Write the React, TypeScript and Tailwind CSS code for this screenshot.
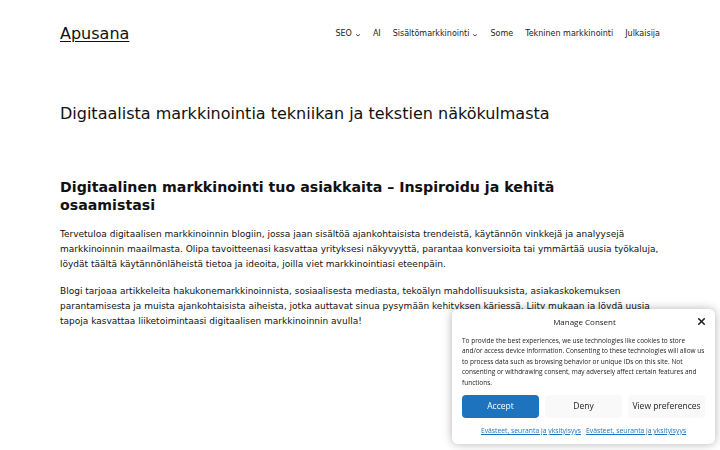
import { X } from 'lucide-react'

function Chevron() {
  return (
    <svg width="6" height="6" viewBox="0 0 12 12" className="ml-[3px] mt-[2px]" fill="none">
      <path d="M2 4.5l4 3.5 4-3.5" stroke="#222" strokeWidth="1.6" />
    </svg>
  )
}

const nav = [
  { label: 'SEO', sub: true },
  { label: 'AI' },
  { label: 'Sisältömarkkinointi', sub: true },
  { label: 'Some' },
  { label: 'Tekninen markkinointi' },
  { label: 'Julkaisija' },
]

function ConsentBox() {
  return (
    <div className="fixed right-[5px] bottom-[6px] w-[263px] bg-white rounded-[6px] shadow-[0_0_10px_rgba(0,0,0,0.3)] px-[10px] pt-[6px] pb-[8px] font-['Open_Sans',sans-serif] text-[#222]">
      <div className="flex items-center justify-between h-[14px]">
        <span className="w-[11px]" />
        <span className="text-[8px] leading-[14px]">Manage Consent</span>
        <X className="mr-[-2px] w-[11px] h-[11px]" strokeWidth={3.5} />
      </div>
      <p className="mt-[7px] text-[6.5px] leading-[10.4px]">
        To provide the best experiences, we use technologies like cookies to store and/or access device information. Consenting to these technologies will allow us to process data such as browsing behavior or unique IDs on this site. Not consenting or withdrawing consent, may adversely affect certain features and functions.
      </p>
      <div className="mt-[7px] flex gap-[6px]">
        <button className="flex-1 h-[23px] rounded-[4px] bg-[#1e73be] text-white text-[8.5px]">Accept</button>
        <button className="flex-1 h-[23px] rounded-[4px] bg-[#f9f9f9] text-[#222] text-[8.5px]">Deny</button>
        <button className="flex-1 h-[23px] rounded-[4px] bg-[#f9f9f9] text-[#222] text-[8.5px]">View preferences</button>
      </div>
      <div className="mt-[8px] flex justify-center gap-[5px] text-[6.8px] leading-[10px] text-[#1e73be]">
        <a className="underline">Evästeet, seuranta ja yksityisyys</a>
        <a className="underline">Evästeet, seuranta ja yksityisyys</a>
      </div>
    </div>
  )
}

export default function App() {
  return (
    <div className="min-h-[450px] bg-white text-[#111] font-['DejaVu_Sans',sans-serif]">
      <header className="px-[60px] pt-[22px] flex items-center justify-between">
        <a className="text-[16px] underline underline-offset-[2px]">Apusana</a>
        <nav className="flex items-center gap-[12px] text-[8px] text-[#222]">
          {nav.map(n => (
            <span key={n.label} className="flex items-center">
              {n.label}
              {n.sub && <Chevron />}
            </span>
          ))}
        </nav>
      </header>

      <main className="px-[60px]">
        <h1 className="mt-[56px] text-[16px] leading-[24px]">Digitaalista markkinointia tekniikan ja tekstien näkökulmasta</h1>

        <h2 className="mt-[52px] max-w-[580px] text-[14.2px] leading-[18px] font-bold">
          Digitaalinen markkinointi tuo asiakkaita – Inspiroidu ja kehitä osaamistasi
        </h2>

        <p className="mt-[13px] text-[9px] leading-[15px]">
          Tervetuloa digitaalisen markkinoinnin blogiin, jossa jaan sisältöä ajankohtaisista trendeistä, käytännön vinkkejä ja analyysejä markkinoinnin maailmasta. Olipa tavoitteenasi kasvattaa yrityksesi näkyvyyttä, parantaa konversioita tai ymmärtää uusia työkaluja, löydät täältä käytännönläheistä tietoa ja ideoita, joilla viet markkinointiasi eteenpäin.
        </p>
        <p className="mt-[12px] text-[9px] leading-[15px]">
          Blogi tarjoaa artikkeleita hakukonemarkkinoinnista, sosiaalisesta mediasta, tekoälyn mahdollisuuksista, asiakaskokemuksen parantamisesta ja muista ajankohtaisista aiheista, jotka auttavat sinua pysymään kehityksen kärjessä. Liity mukaan ja löydä uusia tapoja kasvattaa liiketoimintaasi digitaalisen markkinoinnin avulla!
        </p>
      </main>

      <ConsentBox />
    </div>
  )
}
